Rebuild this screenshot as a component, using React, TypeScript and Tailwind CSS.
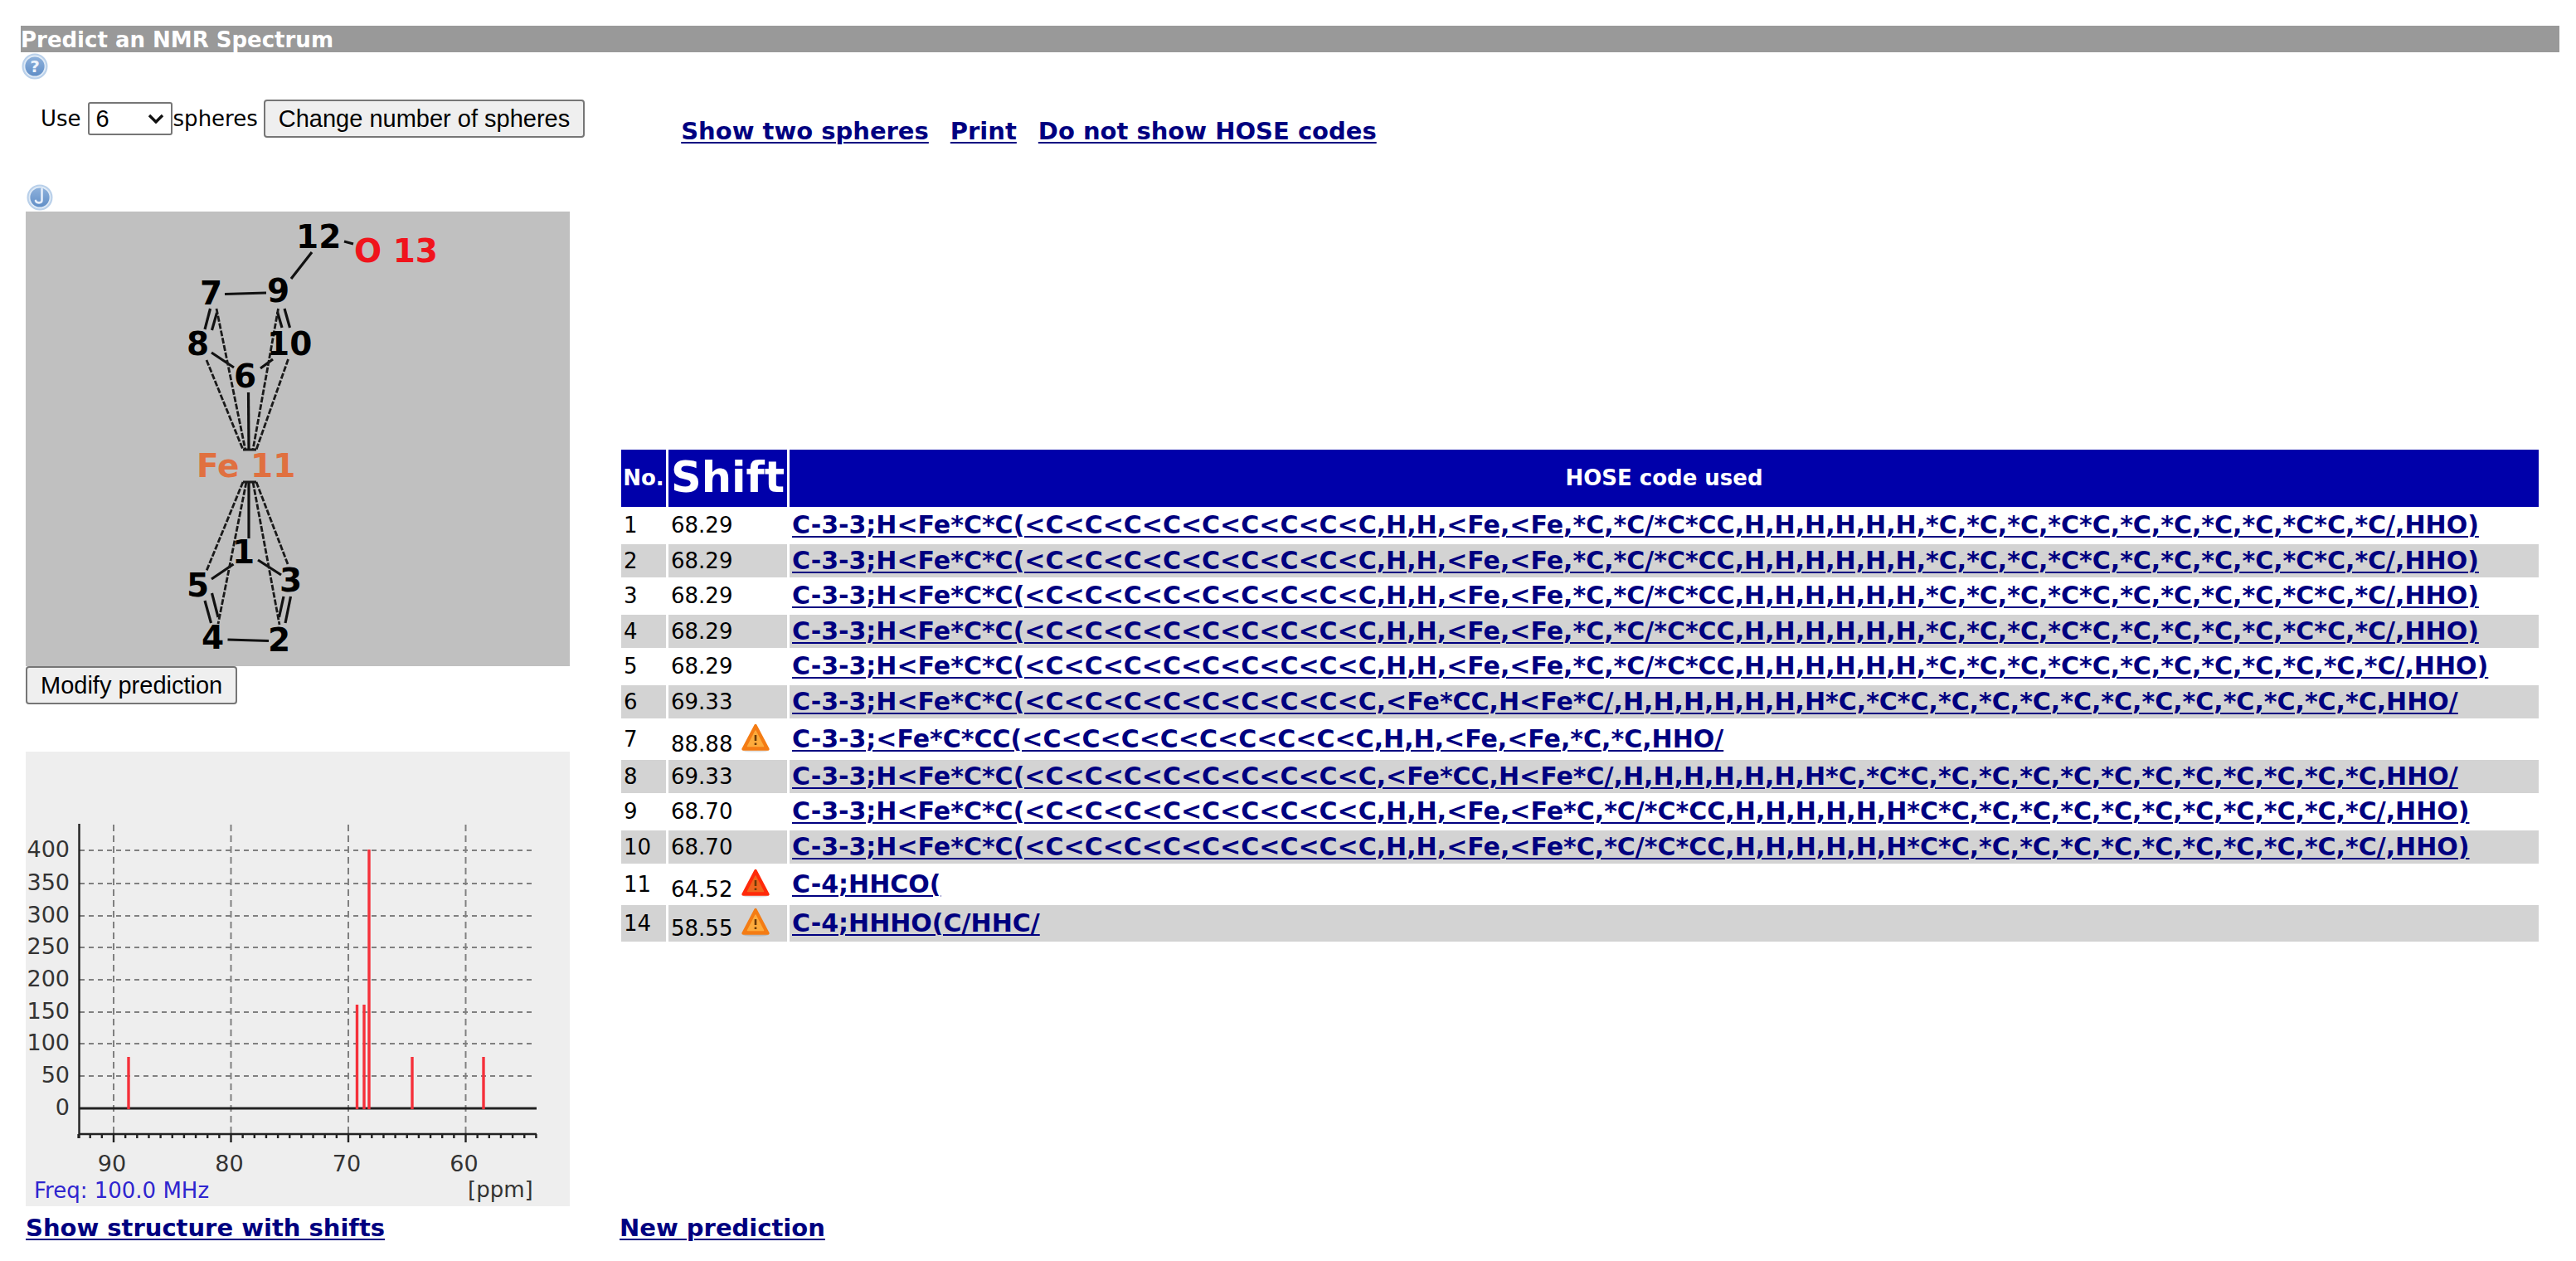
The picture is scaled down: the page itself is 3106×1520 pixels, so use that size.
import React, { useId, useState } from 'react';

interface Prediction {
  no: number;
  shift: string;
  hose: string;
  warning?: 'medium' | 'high';
}

type Segment = [number, number, number, number];

const predictions: Prediction[] = [
  { no: 1, shift: '68.29', hose: 'C-3-3;H<Fe*C*C(<C<C<C<C<C<C<C<C<C,H,H,<Fe,<Fe,*C,*C/*C*CC,H,H,H,H,H,H,*C,*C,*C,*C*C,*C,*C,*C,*C,*C*C,*C/,HHO)' },
  { no: 2, shift: '68.29', hose: 'C-3-3;H<Fe*C*C(<C<C<C<C<C<C<C<C<C,H,H,<Fe,<Fe,*C,*C/*C*CC,H,H,H,H,H,H,*C,*C,*C,*C*C,*C,*C,*C,*C,*C*C,*C/,HHO)' },
  { no: 3, shift: '68.29', hose: 'C-3-3;H<Fe*C*C(<C<C<C<C<C<C<C<C<C,H,H,<Fe,<Fe,*C,*C/*C*CC,H,H,H,H,H,H,*C,*C,*C,*C*C,*C,*C,*C,*C,*C*C,*C/,HHO)' },
  { no: 4, shift: '68.29', hose: 'C-3-3;H<Fe*C*C(<C<C<C<C<C<C<C<C<C,H,H,<Fe,<Fe,*C,*C/*C*CC,H,H,H,H,H,H,*C,*C,*C,*C*C,*C,*C,*C,*C,*C*C,*C/,HHO)' },
  { no: 5, shift: '68.29', hose: 'C-3-3;H<Fe*C*C(<C<C<C<C<C<C<C<C<C,H,H,<Fe,<Fe,*C,*C/*C*CC,H,H,H,H,H,H,*C,*C,*C,*C*C,*C,*C,*C,*C,*C,*C,*C/,HHO)' },
  { no: 6, shift: '69.33', hose: 'C-3-3;H<Fe*C*C(<C<C<C<C<C<C<C<C<C,<Fe*CC,H<Fe*C/,H,H,H,H,H,H,H*C,*C*C,*C,*C,*C,*C,*C,*C,*C,*C,*C,*C,*C,HHO/' },
  { no: 7, shift: '88.88', hose: 'C-3-3;<Fe*C*CC(<C<C<C<C<C<C<C<C<C,H,H,<Fe,<Fe,*C,*C,HHO/', warning: 'medium' },
  { no: 8, shift: '69.33', hose: 'C-3-3;H<Fe*C*C(<C<C<C<C<C<C<C<C<C,<Fe*CC,H<Fe*C/,H,H,H,H,H,H,H*C,*C*C,*C,*C,*C,*C,*C,*C,*C,*C,*C,*C,*C,HHO/' },
  { no: 9, shift: '68.70', hose: 'C-3-3;H<Fe*C*C(<C<C<C<C<C<C<C<C<C,H,H,<Fe,<Fe*C,*C/*C*CC,H,H,H,H,H,H*C*C,*C,*C,*C,*C,*C,*C,*C,*C,*C,*C/,HHO)' },
  { no: 10, shift: '68.70', hose: 'C-3-3;H<Fe*C*C(<C<C<C<C<C<C<C<C<C,H,H,<Fe,<Fe*C,*C/*C*CC,H,H,H,H,H,H*C*C,*C,*C,*C,*C,*C,*C,*C,*C,*C,*C/,HHO)' },
  { no: 11, shift: '64.52', hose: 'C-4;HHCO(', warning: 'high' },
  { no: 14, shift: '58.55', hose: 'C-4;HHHO(C/HHC/', warning: 'medium' },
];

const linkClass = 'text-[29px] leading-9 font-bold text-[#000080] underline underline-offset-3 decoration-2';
const buttonClass =
  'h-[46px] rounded-[4px] border-2 border-[#767676] bg-[#efefef] px-4 font-["Liberation_Sans",Arial,sans-serif] text-[29px] leading-9 text-black whitespace-nowrap';

const RoundIcon = ({ glyph, label }: { glyph: string; label: string }) => {
  const id = useId();
  return (
    <svg viewBox="0 0 32 32" className="block size-8" role="img" aria-label={label}>
      <defs>
        <linearGradient id={id} x1="0" y1="0" x2="0" y2="1">
          <stop offset="0" stopColor="#8fb2dc" />
          <stop offset="1" stopColor="#5f8dc6" />
        </linearGradient>
      </defs>
      <circle cx="16" cy="16" r="15.5" fill="#b9d0ea" />
      <circle cx="16" cy="16" r="12.5" fill={`url(#${id})`} stroke="#dfeaf6" strokeWidth="1.8" />
      {glyph === '?' ? (
        <text x="16" y="23" textAnchor="middle" fontSize="20" fontWeight="bold" fill="#eef4fc">?</text>
      ) : (
        <path d="M18.5 6v13.5c0 3.6-6 4-7.5.4" fill="none" stroke="#e6eefa" strokeWidth="2.6" strokeLinecap="round" />
      )}
    </svg>
  );
};

const WarningIcon = ({ level }: { level: 'medium' | 'high' }) => {
  const outer = level === 'high' ? '#ff2a0a' : '#f47c14';
  const inner = level === 'high' ? '#f0641e' : '#fdab3c';
  return (
    <svg viewBox="0 0 36 35" className="mb-1.5 h-[35px] w-9" role="img" aria-label={`${level} uncertainty`}>
      <ellipse cx="18" cy="33" rx="15" ry="1.6" fill="#000" opacity="0.12" />
      <path d="M18 2.5 33 31H3Z" fill={outer} stroke={outer} strokeWidth="3.4" strokeLinejoin="round" />
      <path d="M18 9 27.5 27.5H8.5Z" fill={inner} stroke={inner} strokeWidth="1.5" strokeLinejoin="round" />
      <path d="M18 14v7M18 23.5v2.500" stroke="#6b3a08" strokeWidth="2.6" />
    </svg>
  );
};

const atoms = [
  { label: '12', x: 326, y: 44, color: '#000' },
  { label: 'O 13', x: 396, y: 61, color: '#f0141c' },
  { label: '7', x: 210, y: 112, color: '#000' },
  { label: '9', x: 291, y: 109, color: '#000' },
  { label: '8', x: 194, y: 173, color: '#000' },
  { label: '10', x: 291, y: 173, color: '#000' },
  { label: '6', x: 251, y: 212, color: '#000' },
  { label: 'Fe 11', x: 206, y: 320, color: '#e07040' },
  { label: '1', x: 249, y: 424, color: '#000' },
  { label: '3', x: 306, y: 458, color: '#000' },
  { label: '5', x: 194, y: 464, color: '#000' },
  { label: '4', x: 212, y: 527, color: '#000' },
  { label: '2', x: 292, y: 530, color: '#000' },
];

const bonds: Segment[] = [
  [345, 49, 320, 81],
  [384, 36, 395, 39],
  [240, 99.5, 290, 98],
  [222.5, 117, 216, 142],
  [230.5, 122, 224.5, 143],
  [312, 117, 318.5, 140],
  [303.5, 121, 309, 140],
  [224, 170, 251, 188],
  [298, 178, 283, 189],
  [268.5, 218, 269, 288],
  [269, 326, 269, 394],
  [224, 443, 250.5, 425],
  [280, 420, 308, 438],
  [216, 469, 223.5, 496],
  [224.5, 460, 232, 489],
  [319.5, 464, 313, 496],
  [311, 464, 305.5, 489],
  [243.5, 516, 293, 517.5],
];

const dashedBonds: Segment[] = [
  [230, 117, 265, 288],
  [304.5, 117, 274, 287],
  [218, 179, 262, 287],
  [316.5, 178, 278, 287],
  [262, 326, 218, 433],
  [278, 326, 316, 425],
  [266, 326, 232, 497],
  [274, 326, 306, 498],
];

const StructureDrawing = () => (
  <svg viewBox="0 0 656 548" className="block w-full bg-[#c0c0c0]" role="img" aria-label="Structure">
    <g stroke="#111" strokeWidth="3.2">
      {bonds.map(([x1, y1, x2, y2], i) => (
        <line key={i} x1={x1} y1={y1} x2={x2} y2={y2} />
      ))}
    </g>
    <g stroke="#1a1a1a" strokeWidth="2.8" strokeDasharray="7 2">
      {dashedBonds.map(([x1, y1, x2, y2], i) => (
        <line key={i} x1={x1} y1={y1} x2={x2} y2={y2} />
      ))}
    </g>
    <path d="M262 287h16M262 326h16" stroke="#1a1a1a" strokeWidth="3" />
    <g fontSize="39" fontWeight="bold">
      {atoms.map((atom) => (
        <text key={atom.label} x={atom.x} y={atom.y} fill={atom.color}>{atom.label}</text>
      ))}
    </g>
  </svg>
);

const peaks = [
  { x: 124, top: 368 },
  { x: 399.5, top: 305 },
  { x: 408, top: 305 },
  { x: 414, top: 118 },
  { x: 466, top: 368 },
  { x: 552, top: 368 },
];

const yTicks = [
  { value: 400, y: 119 },
  { value: 350, y: 159 },
  { value: 300, y: 198 },
  { value: 250, y: 236 },
  { value: 200, y: 275 },
  { value: 150, y: 314 },
  { value: 100, y: 352 },
  { value: 50, y: 391 },
  { value: 0, y: 430 },
];

const ppmToX = (ppm: number) => 106 + (90 - ppm) * 14.15;

const SpectrumChart = () => (
  <svg viewBox="0 0 656 548" className="block w-full bg-[#eeeeee]" role="img" aria-label="Predicted spectrum">
    <g stroke="#808080" strokeWidth="2" strokeDasharray="6 5">
      {yTicks.filter((t) => t.value > 0).map((t) => (
        <line key={t.value} x1="65" y1={t.y} x2="610" y2={t.y} />
      ))}
    </g>
    <g stroke="#808080" strokeWidth="2" strokeDasharray="8 5">
      {[90, 80, 70, 60].map((ppm) => (
        <line key={ppm} x1={ppmToX(ppm)} y1="88" x2={ppmToX(ppm)} y2="461" />
      ))}
    </g>
    <g stroke="#222" strokeWidth="2.4">
      <path d="M64.5 87V466M64 461H616" fill="none" />
      <path d="M64 430H616" strokeWidth="3" />
      {Array.from({ length: 40 }, (_, i) => 93 - i).map((ppm) => (
        <line key={ppm} x1={ppmToX(ppm)} y1="461" x2={ppmToX(ppm)} y2={ppm % 10 === 0 ? 471 : 466} />
      ))}
    </g>
    <g stroke="#f5303a" strokeWidth="3.4">
      {peaks.map((peak) => (
        <line key={peak.x} x1={peak.x} y1={peak.top} x2={peak.x} y2="431" />
      ))}
    </g>
    <g fontSize="27" fill="#333">
      {yTicks.map((t) => (
        <text key={t.value} x="53" y={t.y + 8} textAnchor="end">{t.value}</text>
      ))}
      {[90, 80, 70, 60].map((ppm) => (
        <text key={ppm} x={ppmToX(ppm) - 2} y="506" textAnchor="middle">{ppm}</text>
      ))}
      <text x="533" y="537" fontSize="26">[ppm]</text>
      <text x="10" y="538" fontSize="26" fill="#2f25cf">Freq: 100.0 MHz</text>
    </g>
  </svg>
);

const PredictionTable = () => (
  <table className="w-full border-separate border-spacing-x-[3px] border-spacing-y-[3px] text-[26px] whitespace-nowrap">
    <thead>
      <tr className="h-[69px] bg-[#0000aa] text-white">
        <th className="w-[54px] p-0 text-center leading-9">No.</th>
        <th className="w-[143px] p-0 text-center text-[51px] leading-[60px]">Shift</th>
        <th className="p-0 text-center leading-9">HOSE code used</th>
      </tr>
    </thead>
    <tbody>
      {predictions.map((row) => {
        const even = row.no % 2 === 0;
        const height = row.warning ? 'h-11' : even ? 'h-10' : 'h-[39px]';
        return (
          <tr key={row.no} className={`${height} ${even ? 'bg-[#d3d3d3]' : ''}`}>
            <td className="py-0 px-[3px] leading-9">{row.no}</td>
            <td className="py-0 px-[3px] leading-9">
              {row.warning ? (
                <div className="flex h-11 items-end gap-2.5">
                  <span className="leading-8">{row.shift}</span>
                  <WarningIcon level={row.warning} />
                </div>
              ) : (
                row.shift
              )}
            </td>
            <td className="py-0 px-[3px] text-[30px] leading-9">
              <a href="#hose" className="font-bold text-[#000080] underline underline-offset-3 decoration-2">{row.hose}</a>
            </td>
          </tr>
        );
      })}
    </tbody>
  </table>
);

export default function App() {
  const [spheres, setSpheres] = useState('6');

  return (
    <main className="bg-white pt-[31px] pr-5 pl-[25px] font-['DejaVu_Sans',Verdana,sans-serif] text-[26px] text-black">
      <h1 className="bg-[#999999] pt-0.5 text-[26px] leading-[30px] font-bold text-white">Predict an NMR Spectrum</h1>
      <a href="#help" className="mt-px ml-px block w-8">
        <RoundIcon glyph="?" label="Help" />
      </a>

      <div className="flex items-start pt-6 pl-6">
        <form className="flex items-center" onSubmit={(e) => e.preventDefault()}>
          <label htmlFor="spheres">Use</label>
          <div className="relative mr-px ml-2">
            <select
              id="spheres"
              value={spheres}
              onChange={(e) => setSpheres(e.target.value)}
              className="block h-10 w-[102px] appearance-none rounded-[3px] border-2 border-[#767676] bg-white pl-2 font-['Liberation_Sans',Arial,sans-serif] text-[29px] leading-8"
            >
              {['1', '2', '3', '4', '5', '6'].map((n) => (
                <option key={n}>{n}</option>
              ))}
            </select>
            <svg viewBox="0 0 20 12" className="pointer-events-none absolute top-3.5 right-2.5 h-3 w-5">
              <path d="M2 2l8 8 8-8" fill="none" stroke="#111" strokeWidth="3.4" />
            </svg>
          </div>
          <label htmlFor="spheres">spheres</label>
          <button type="submit" className={`ml-[7px] ${buttonClass}`}>Change number of spheres</button>
        </form>
        <nav className="ml-[116px] flex gap-[26px] pt-5">
          <a href="#two-spheres" className={linkClass}>Show two spheres</a>
          <a href="#print" className={linkClass}>Print</a>
          <a href="#hide-codes" className={linkClass}>Do not show HOSE codes</a>
        </nav>
      </div>

      <div className="mt-[46px] flex items-center gap-[59px] pr-[22px] pl-1.5">
        <div className="w-[656px] shrink-0">
          <a href="#jcamp" className="mb-px ml-px block w-8">
            <RoundIcon glyph="J" label="Structure editor help" />
          </a>
          <StructureDrawing />
          <button type="button" className={buttonClass}>Modify prediction</button>
          <div className="mt-[57px]">
            <SpectrumChart />
          </div>
        </div>
        <div className="min-w-0 flex-1">
          <PredictionTable />
        </div>
      </div>

      <div className="mt-2 flex gap-[60px] pl-1.5">
        <div className="w-[656px]">
          <a href="#shifts" className={linkClass}>Show structure with shifts</a>
        </div>
        <a href="#new" className={linkClass}>New prediction</a>
      </div>
    </main>
  );
}
